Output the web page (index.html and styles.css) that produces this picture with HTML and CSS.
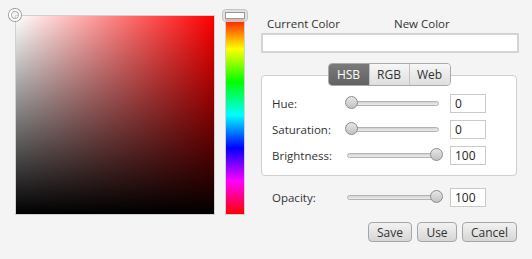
FILE: index.html
```html
<!DOCTYPE html>
<html>
  <head>
    <title>Color Picker</title>
    <meta name="viewport" content="width=device-width, initial-scale=1.0" />
    <link rel="stylesheet" href="styles.css">
  </head>
  <body>
    <div class="picker">
      <div class="area">
        <div class="square"></div>
        <div class="area-thumb"></div>
      </div>
      <div class="hue">
        <div class="hue-thumb"><span></span></div>
      </div>
      <div class="side">
        <div class="heads">
          <span>Current Color</span>
          <span class="new">New Color</span>
        </div>
        <div class="swatch"></div>
        <div class="tabs">
          <button class="tab on">HSB</button>
          <button class="tab">RGB</button>
          <button class="tab">Web</button>
        </div>
        <div class="panel">
          <div class="row">
            <label>Hue:</label>
            <div class="slider min"><div class="track"></div><div class="knob"></div></div>
            <input type="text" value="0" />
          </div>
          <div class="row">
            <label>Saturation:</label>
            <div class="slider min"><div class="track"></div><div class="knob"></div></div>
            <input type="text" value="0" />
          </div>
          <div class="row">
            <label>Brightness:</label>
            <div class="slider max"><div class="track"></div><div class="knob"></div></div>
            <input type="text" value="100" />
          </div>
        </div>
        <div class="row opacity">
          <label>Opacity:</label>
          <div class="slider max"><div class="track"></div><div class="knob"></div></div>
          <input type="text" value="100" />
        </div>
        <div class="actions">
          <button class="btn save">Save</button>
          <button class="btn use">Use</button>
          <button class="btn cancel">Cancel</button>
        </div>
      </div>
    </div>
  </body>
</html>
```
FILE: styles.css
```css
body {
  margin: 0;
  background-color: #f4f4f4;
  font-family: "Open Sans", "DejaVu Sans", sans-serif;
  font-size: 11.5px;
  color: #333;
}
.picker {
  display: flex;
  padding: 15px 0 0 15px;
}

/* saturation / brightness area */
.area {
  position: relative;
  width: 200px;
  height: 200px;
}
.square {
  box-sizing: border-box;
  width: 200px;
  height: 200px;
  border: 1px solid #d0d0d0;
  background: linear-gradient(to bottom, rgba(0, 0, 0, 0), #000),
    linear-gradient(to right, #fff, #f00);
}
.area-thumb {
  position: absolute;
  left: -6px;
  top: -6px;
  width: 8px;
  height: 8px;
  border-radius: 50%;
  border: 2px solid #fff;
  box-shadow: 0 0 0 1px #999, inset 0 0 0 1px #aaa;
}

/* hue bar */
.hue {
  position: relative;
  box-sizing: border-box;
  margin-left: 10px;
  width: 20px;
  height: 200px;
  border: 1px solid #d0d0d0;
  background: linear-gradient(to bottom, #f00, #ff0, #0f0, #0ff, #00f, #f0f, #f00);
}
.hue-thumb {
  position: absolute;
  left: -4px;
  top: -7px;
  box-sizing: border-box;
  width: 26px;
  height: 13px;
  border-radius: 4px;
  background: rgba(220, 220, 220, 0.8);
  border: 1px solid #c4c4c4;
  display: flex;
  align-items: center;
  justify-content: center;
}
.hue-thumb span {
  box-sizing: border-box;
  width: 20px;
  height: 7px;
  border: 1px solid #999;
  background: #fff;
}

/* right side */
.side {
  margin-left: 16px;
  width: 258px;
  display: flex;
  flex-direction: column;
}
.heads {
  display: flex;
  height: 16px;
  align-items: center;
  padding-left: 6px;
}
.heads .new {
  margin-left: 54px;
}
.swatch {
  box-sizing: border-box;
  margin-top: 2px;
  height: 20px;
  border: 2px solid #d4d4d4;
  background: #fff;
}
.tabs {
  align-self: center;
  display: flex;
  margin: 10px 0 0 0;
  position: relative;
  z-index: 1;
  border: 1px solid #a9a9a9;
  border-radius: 4px;
  overflow: hidden;
  margin-left: -2px;
}
.tab {
  height: 21px;
  width: 40px;
  padding: 0;
  border: none;
  border-left: 1px solid #c4c4c4;
  background: linear-gradient(to bottom, #f7f7f7, #dedede);
  font-family: inherit;
  font-size: 12px;
  color: #333;
}
.tab:first-child {
  border-left: none;
}
.tab:last-child {
  width: 41px;
}
.tab.on {
  background: linear-gradient(to bottom, #7a7a7a, #626262);
  color: #fff;
}
.panel {
  margin-top: -11px;
  width: 256px;
  box-sizing: border-box;
  padding: 14px 0 7px 10px;
  border: 1px solid #cfcfcf;
  border-radius: 4px;
  background: #fff;
}
.row {
  display: flex;
  align-items: center;
  height: 26px;
}
.row label {
  width: 73px;
}
.slider {
  position: relative;
  width: 98px;
  height: 14px;
}
.track {
  position: absolute;
  left: 2px;
  right: 4px;
  top: 5px;
  height: 3px;
  border: 1px solid #b3b3b3;
  border-radius: 3px;
  background: linear-gradient(to bottom, #d4d4d4, #ececec);
}
.knob {
  position: absolute;
  top: 0;
  box-sizing: border-box;
  width: 13px;
  height: 13px;
  border-radius: 50%;
  border: 1px solid #8c8c8c;
  background: linear-gradient(to bottom, #e6e6e6, #c2c2c2);
}
.slider.min .knob {
  left: 0;
}
.slider.max .knob {
  right: 0;
}
.row input {
  box-sizing: border-box;
  margin-left: 7px;
  width: 36px;
  height: 19px;
  padding: 0 4px;
  border: 1px solid #cacaca;
  background: #fff;
  font-family: inherit;
  font-size: 12px;
  color: #222;
}
.opacity {
  margin-top: 8px;
  padding-left: 11px;
}
.actions {
  display: flex;
  justify-content: flex-end;
  gap: 5px;
  margin-top: 12px;
  padding-right: 2px;
}
.btn {
  height: 20px;
  padding: 0;
  border: 1px solid #a6a6a6;
  border-radius: 4px;
  background: linear-gradient(to bottom, #f2f2f2, #d6d6d6);
  font-family: inherit;
  font-size: 12px;
  color: #333;
}
.save {
  width: 44px;
}
.use {
  width: 40px;
}
.cancel {
  width: 55px;
}
```
